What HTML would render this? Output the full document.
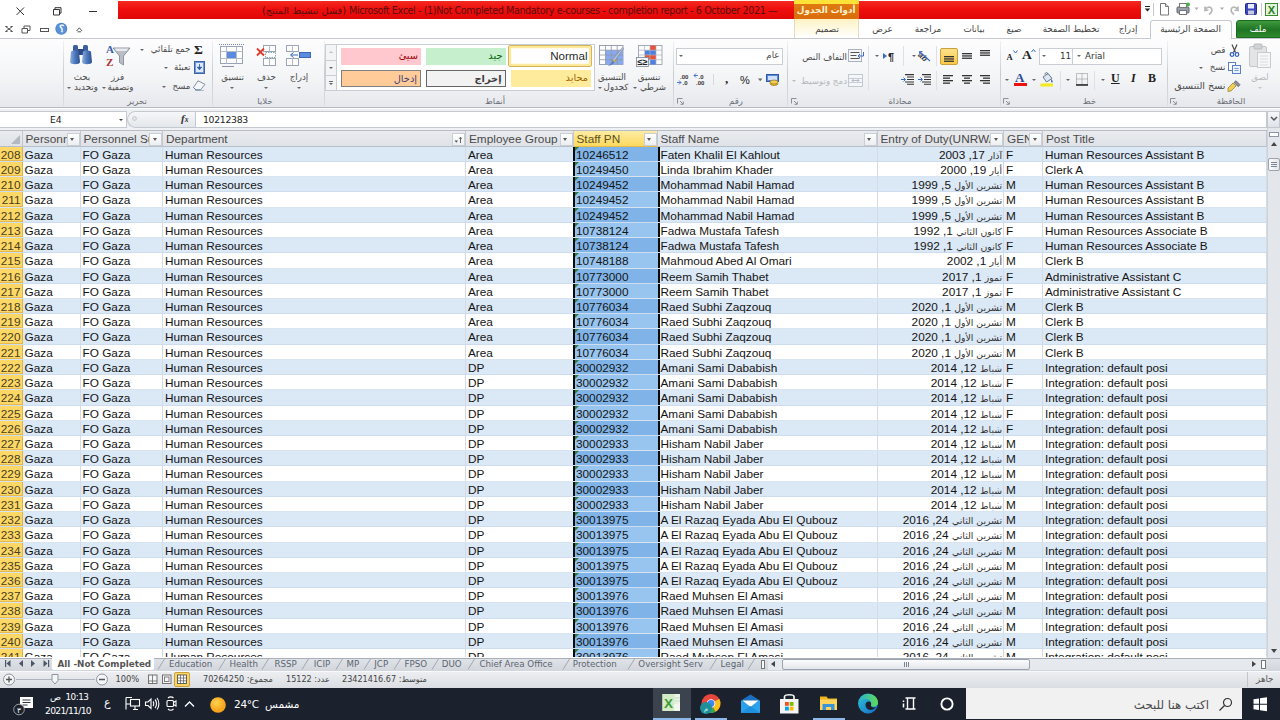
<!DOCTYPE html><html lang="ar"><head><meta charset="utf-8"><title>Excel</title><style>
*{box-sizing:border-box;margin:0;padding:0}
html,body{width:1280px;height:720px;overflow:hidden;background:#fff}
body{position:relative;font-family:"Liberation Sans","DejaVu Sans",sans-serif;font-size:11.8px;color:#000}
.a{position:absolute;white-space:pre}
.ui{font-family:"DejaVu Sans","Liberation Sans",sans-serif;font-size:9.2px;color:#3b3b3b}
.row{position:absolute;left:0;width:1267px;height:15.22px}
.c{position:absolute;top:0;height:100%;line-height:17.4px;white-space:pre;overflow:hidden;border-right:1px solid #d4dbe4;padding-left:2px;color:#141414}
.rh{position:absolute;left:0;top:0;width:22.5px;height:100%;background:#fdd866;border-right:1px solid #e2b340;border-bottom:1px solid #e7b94a;text-align:right;padding-right:1px;line-height:17.4px;color:#4a4020;font-size:11.8px}
.hd{position:absolute;top:130.5px;height:16px;line-height:16.5px;background:linear-gradient(#e9ebee,#dfe2e7);border-right:1px solid #c3c8d0;border-bottom:1px solid #b9bfc8;color:#4a4a4a;padding-left:3px;white-space:pre;overflow:hidden}
.dd{position:absolute;top:2px;width:13px;height:13.2px;background:linear-gradient(#ffffff,#eceef1);border:1px solid #c9cdd4;}
.dd:after{content:"";position:absolute;left:2.6px;top:4.2px;border:2.9px solid transparent;border-top:3.2px solid #5a5a5a;}
.ar{font-family:"DejaVu Sans",sans-serif;font-size:9.3px;color:#333}
.dds:after{display:none}
.tri{position:absolute;left:0;top:0;width:0;height:0;border-top:4px solid #2d7d46;border-right:4px solid transparent}
.glabel{position:absolute;top:95.5px;font-family:"DejaVu Sans","Liberation Sans",sans-serif;font-size:8.5px;color:#6a6f78;transform:translateX(-50%);white-space:pre}
.gsep{position:absolute;top:41px;width:1px;height:65px;background:linear-gradient(#f0f1f3,#c9cdd3 50%,#d9dce1)}
.tab{position:absolute;top:24px;font-family:"DejaVu Sans","Liberation Sans",sans-serif;font-size:8.8px;color:#444;transform:translateX(-50%);white-space:pre}
.lbl{position:absolute;font-family:"DejaVu Sans","Liberation Sans",sans-serif;font-size:8.7px;color:#4c4c4c;white-space:pre}
.cx{transform:translateX(-50%)}
.arr{position:absolute;width:0;height:0;border:2.2px solid transparent;border-top:2.8px solid #666}
.stab{position:absolute;top:659px;font-family:"DejaVu Sans","Liberation Sans",sans-serif;font-size:8.7px;color:#5c6470;white-space:pre}
</style></head><body>
<div class="a" style="left:118px;top:1px;width:1023px;height:17.700px;background:linear-gradient(#f42a22,#ee0f0c 45%,#e00707);"></div>
<div class="a" dir="ltr" style="left:349px;top:4px;width:434px;height:14px;line-height:14px;font-family:'DejaVu Sans','Liberation Sans',sans-serif;font-size:9.6px;color:#5a0d0d;letter-spacing:-0.385px" id="ttl">Microsoft Excel - (1)Not Completed Mandatory e-courses - completion report - 6 October 2021 —</div>
<div class="a" dir="rtl" style="right:934px;top:4px;height:14px;line-height:14px;font-family:'DejaVu Sans',sans-serif;font-size:9.7px;color:#5a0d0d;" id="ttl2">(فشل تنشيط المنتج)</div>
<div class="a" style="left:793.5px;top:0;width:65.5px;height:3.5px;background:#fde23a"></div>
<div class="a" style="left:793.5px;top:3.5px;width:65.5px;height:15.5px;background:linear-gradient(#e07a10,#d96c0c)"></div>
<div class="a" style="left:793.5px;top:19px;width:65.5px;height:19px;background:linear-gradient(#fdf3c4,#ffffff);border-left:1px solid #e4dcc0;border-right:1px solid #e4dcc0"></div>
<div class="a" dir="rtl" style="left:793.5px;top:5px;width:65.5px;text-align:center;font-family:'DejaVu Sans',sans-serif;font-size:8.8px;font-weight:bold;color:#fff3d0">أدوات الجدول</div>
<svg class="a" style="left:0;top:0" width="118" height="38" viewBox="0 0 118 38"><g stroke="#333" stroke-width="1" fill="none"><path d="M16.5 7.5l7.5 7.5M24 7.5l-7.5 7.5"/><path d="M53.5 9.5h6v5.5h-6zM55 9.5v-1.8h6v5.5h-1.5"/><path d="M89 11.5h8"/></g><g stroke="#555" stroke-width="1" fill="none"><path d="M5.5 26.5l7 5M12.5 26.5l-7 5M5.5 26.5h2M10.5 26.5h2M5.5 31.5h2M10.5 31.5h2" /><path d="M22 28.5h5.5v4.5h-5.5zM24 28v-2h6v4.5h-2"/><rect x="40.5" y="28.5" width="8" height="3"/><path d="M76.5 31l2.8-3.2 2.8 3.2"/><path d="M77.5 31.8h3.6"/></g><circle cx="61.3" cy="28.7" r="6" fill="#4a7fc4"/><circle cx="61.3" cy="28.7" r="5.2" fill="#5b92d6"/><text x="61.3" y="32.2" font-size="9.5" font-weight="bold" font-family="Liberation Sans, sans-serif" fill="#fff" text-anchor="middle">؟</text></svg>
<svg class="a" style="left:1141px;top:0" width="139" height="20" viewBox="0 0 139 20"><path d="M4 6.5h5" stroke="#222" stroke-width="1"/><path d="M3.7 8.5h5.6l-2.8 3z" fill="#222"/><path d="M12.5 3v13" stroke="#c8c8c8"/><path d="M19.5 3.5h5l3 3v8.500h-8z" fill="#fff" stroke="#777"/><path d="M24.500 3.500v3h3" fill="#e8e8e8" stroke="#777"/><rect x="36" y="7" width="12" height="6" rx="1" fill="#9aa3ad" stroke="#5b646e"/><rect x="38.500" y="3.500" width="7" height="4" fill="#fff" stroke="#777"/><rect x="38.500" y="10.500" width="7" height="4" fill="#fff" stroke="#777"/><circle cx="47" cy="4.500" r="2" fill="#4caf50"/><path d="M53.500 7.500h4l-2 2.500z" fill="#aaa"/><path d="M64 6.500l0 4 3.500-0.500M64 10c1.500-3 5-4 6.500-1.500 1 2-0.500 4.500-2.500 6" fill="none" stroke="#b5b5b5" stroke-width="1.600"/><path d="M79 7.500h4l-2 2.500z" fill="#aaa"/><path d="M97 6.500l0 4-3.500-0.500M97 10c-1.500-3-5-4-6.500-1.500-1 2 0.500 4.500 2.500 6" fill="none" stroke="#b5b5b5" stroke-width="1.600"/><rect x="104.500" y="3.500" width="11" height="11" rx="1" fill="#3b46b8" stroke="#252d86"/><rect x="107" y="4" width="6" height="4.500" fill="#e9ecff"/><rect x="107" y="10.500" width="6" height="4" fill="#c7cbe0"/><path d="M120.500 3v13" stroke="#c8c8c8"/><rect x="124.500" y="3.500" width="12" height="12" fill="#e4f3dc" stroke="#3b8a2f"/><text x="130.500" y="13.500" font-size="11" font-weight="bold" font-family="Liberation Sans, sans-serif" fill="#2a7d23" text-anchor="middle">X</text></svg>
<div class="a" style="left:0;top:37.500px;width:1280px;height:70.500px;background:linear-gradient(#fdfdfe,#f4f5f7 55%,#e6e8ec);border-top:1px solid #c5c9cf;border-bottom:1px solid #b4b9c1"></div>
<div class="a" style="left:1235.500px;top:20px;width:46px;height:18px;background:linear-gradient(#3f9a3c,#1e7424 55%,#2f8a2c);border:1px solid #1a6a1f;border-radius:3px 3px 0 0"></div>
<div class="tab" dir="rtl" style="left:1258px;color:#fff;">ملف</div>
<div class="a" style="left:1150px;top:20px;width:82px;height:18.500px;background:#fdfdfe;border:1px solid #c5c9cf;border-bottom:none;border-radius:3px 3px 0 0"></div>
<div class="tab" dir="rtl" style="left:1190.5px">الصفحة الرئيسية</div>
<div class="tab" dir="rtl" style="left:1128px">إدراج</div>
<div class="tab" dir="rtl" style="left:1071px">تخطيط الصفحة</div>
<div class="tab" dir="rtl" style="left:1014px">صيغ</div>
<div class="tab" dir="rtl" style="left:974px">بيانات</div>
<div class="tab" dir="rtl" style="left:928px">مراجعة</div>
<div class="tab" dir="rtl" style="left:882.5px">عرض</div>
<div class="tab" dir="rtl" style="left:827px">تصميم</div>
<div class="gsep" style="left:62.5px"></div>
<div class="gsep" style="left:212px"></div>
<div class="gsep" style="left:324px"></div>
<div class="gsep" style="left:672.5px"></div>
<div class="gsep" style="left:787px"></div>
<div class="gsep" style="left:999.5px"></div>
<div class="gsep" style="left:1167px"></div>
<div class="glabel" dir="rtl" style="left:137px">تحرير</div>
<div class="glabel" dir="rtl" style="left:265px">خلايا</div>
<div class="glabel" dir="rtl" style="left:495px">أنماط</div>
<div class="glabel" dir="rtl" style="left:736px">رقم</div>
<div class="glabel" dir="rtl" style="left:900px">محاذاة</div>
<div class="glabel" dir="rtl" style="left:1089.5px">خط</div>
<div class="glabel" dir="rtl" style="left:1231px">الحافظة</div>
<svg class="a" style="left:676.5px;top:98px" width="7" height="7" viewBox="0 0 7 7"><path d="M0.500 5.500v-5h5" fill="none" stroke="#8a9099"/><path d="M3 3l3 3M6.300 3.500v2.800h-2.800" fill="none" stroke="#8a9099"/></svg>
<svg class="a" style="left:791px;top:98px" width="7" height="7" viewBox="0 0 7 7"><path d="M0.500 5.500v-5h5" fill="none" stroke="#8a9099"/><path d="M3 3l3 3M6.300 3.500v2.800h-2.800" fill="none" stroke="#8a9099"/></svg>
<svg class="a" style="left:1003px;top:98px" width="7" height="7" viewBox="0 0 7 7"><path d="M0.500 5.500v-5h5" fill="none" stroke="#8a9099"/><path d="M3 3l3 3M6.300 3.500v2.800h-2.800" fill="none" stroke="#8a9099"/></svg>
<svg class="a" style="left:1170px;top:98px" width="7" height="7" viewBox="0 0 7 7"><path d="M0.500 5.500v-5h5" fill="none" stroke="#8a9099"/><path d="M3 3l3 3M6.300 3.500v2.800h-2.800" fill="none" stroke="#8a9099"/></svg>
<svg class="a" style="left:69px;top:44px" width="24" height="22" viewBox="0 0 24 22"><defs><linearGradient id="bn" x1="0" x2="1"><stop offset="0" stop-color="#8fb0dd"/><stop offset="0.500" stop-color="#4d78bd"/><stop offset="1" stop-color="#2d4f91"/></linearGradient></defs><rect x="4" y="1" width="5" height="7" rx="1.500" fill="#3d5f9f"/><rect x="14" y="1" width="5" height="7" rx="1.500" fill="#3d5f9f"/><rect x="9" y="5" width="6" height="6" fill="#2d4a85"/><path d="M2 8c0-2 8-2 8 0l1 10c0 3-10 3-10 0z" fill="url(#bn)"/><path d="M14 8c0-2 8-2 8 0l1 10c0 3-10 3-10 0z" fill="url(#bn)"/></svg>
<div class="lbl cx" dir="rtl" style="left:82px;top:72px;">بحث</div>
<div class="lbl cx" dir="rtl" style="left:86px;top:81.5px;">وتحديد</div>
<div class="arr" style="left:67.3px;top:86.5px;border-top-color:#666"></div>
<svg class="a" style="left:105px;top:43px" width="27" height="25" viewBox="0 0 27 25"><text x="1" y="10" font-size="11" font-weight="bold" font-family="Liberation Serif, serif" fill="#3a5fa8">A</text><text x="1" y="23" font-size="11" font-weight="bold" font-family="Liberation Serif, serif" fill="#a83232">Z</text><path d="M8 5h17l-6.500 8v9l-4-2.500v-6.500z" fill="#b9bec6" stroke="#7c828c" stroke-width="0.800"/><path d="M9.500 5.600h14l-2 2.500h-10z" fill="#e9ebee"/></svg>
<div class="lbl cx" dir="rtl" style="left:117.5px;top:72px;">فرز</div>
<div class="lbl cx" dir="rtl" style="left:120.5px;top:81.5px;">وتصفية</div>
<div class="arr" style="left:101.8px;top:86.5px;border-top-color:#666"></div>
<div class="a" style="left:194px;top:42px;font-family:'Liberation Serif',serif;font-weight:bold;font-size:13.500px;color:#222">Σ</div>
<div class="lbl" dir="rtl" style="right:1089.5px;top:43.5px;">جمع تلقائي</div>
<div class="arr" style="left:139.8px;top:48.5px;border-top-color:#666"></div>
<svg class="a" style="left:193.500px;top:61px" width="11" height="13" viewBox="0 0 11 13"><rect x="0.500" y="0.500" width="10" height="12" fill="#6d97d6" stroke="#3c63a6"/><rect x="2" y="2" width="7" height="9" fill="#dfeaf9"/><path d="M5.500 3v5M3.300 6.200l2.200 2.600 2.200-2.600z" fill="#2c58a8" stroke="#2c58a8" stroke-width="0.800"/></svg>
<div class="lbl" dir="rtl" style="right:1089.5px;top:62px;">تعبئة</div>
<div class="arr" style="left:164.3px;top:67px;border-top-color:#666"></div>
<svg class="a" style="left:193px;top:80px" width="13" height="11" viewBox="0 0 13 11"><path d="M5 0.800l7 3.500-4.500 5.700h-4.500l-2.500-2.500z" fill="#f4f6fa" stroke="#7d8796" stroke-width="0.900"/><path d="M0.500 7.500l2.500 2.500h4.500" fill="none" stroke="#5a79b5"/><path d="M2 10.500h9" stroke="#9aa" stroke-width="0.700"/></svg>
<div class="lbl" dir="rtl" style="right:1089.5px;top:80.5px;">مسح</div>
<div class="arr" style="left:161.8px;top:85.5px;border-top-color:#666"></div>
<svg class="a" style="left:219px;top:44px" width="26" height="24" viewBox="0 0 26 24"><rect x="1.500" y="2.500" width="22" height="17" fill="#fff" stroke="#9aa4b4"/><path d="M1.500 7.500h22M1.500 14.500h22M7.500 2.500v17M17.500 2.500v17" stroke="#b4bcc9"/><rect x="8" y="8" width="9" height="6" fill="#5a8be0"/><path d="M0 0.500h26" stroke="#7a8aa5" stroke-dasharray="1 1"/><path d="M3 22.500h12" stroke="#8a94a5"/></svg>
<div class="lbl cx" dir="rtl" style="left:232.5px;top:72px;">تنسيق</div>
<div class="arr" style="left:230.3px;top:86.5px;border-top-color:#666"></div>
<svg class="a" style="left:256px;top:44px" width="22" height="24" viewBox="0 0 22 24"><rect x="7.500" y="1.500" width="12" height="6" fill="#fff" stroke="#9aa4b4"/><rect x="7.500" y="14.500" width="12" height="7" fill="#fff" stroke="#9aa4b4"/><path d="M13.500 1.500v6M13.500 14.500v7" stroke="#b4bcc9"/><rect x="9.500" y="8.500" width="10" height="5" fill="#fff" stroke="#8aa" stroke-dasharray="1.500 1"/><path d="M1 4.500l7 7M8 4.500l-7 7" stroke="#e03a2a" stroke-width="1.800"/></svg>
<div class="lbl cx" dir="rtl" style="left:266.5px;top:72px;">حذف</div>
<div class="arr" style="left:264.3px;top:86.5px;border-top-color:#666"></div>
<svg class="a" style="left:285px;top:44px" width="27" height="24" viewBox="0 0 27 24"><rect x="1.500" y="1.500" width="12" height="6" fill="#fff" stroke="#9aa4b4"/><rect x="1.500" y="14.500" width="12" height="7" fill="#fff" stroke="#9aa4b4"/><path d="M7.500 1.500v6M7.500 14.500v7" stroke="#b4bcc9"/><rect x="14.500" y="8.500" width="11" height="5" fill="#5a8be0" stroke="#3c68b8"/><path d="M13 11h-7M8.500 8.500l-3 2.500 3 2.500" stroke="#3c68b8" fill="none"/></svg>
<div class="lbl cx" dir="rtl" style="left:299px;top:72px;">إدراج</div>
<div class="arr" style="left:296.8px;top:86.5px;border-top-color:#666"></div>
<div class="a" style="left:325px;top:44px;width:269.500px;height:46.500px;background:#fff;border:1px solid #c9cdd4"></div>
<div class="a" style="left:325px;top:44px;width:11.500px;height:46.500px;background:#f3f4f6;border:1px solid #c9cdd4"></div>
<div class="a" style="left:325px;top:59.500px;width:11.500px;height:1px;background:#c9cdd4"></div><div class="a" style="left:325px;top:75px;width:11.500px;height:1px;background:#c9cdd4"></div>
<div class="arr" style="left:328.500px;top:54px;border-top-color:transparent;border-bottom:2.800px solid #c0c0c0;top:49px"></div>
<div class="arr" style="left:328.6px;top:67px;border-top-color:#666"></div>
<div class="arr" style="left:328.6px;top:83px;border-top-color:#666"></div>
<div class="a" style="left:328.500px;top:80.500px;width:4.500px;height:1px;background:#666"></div>
<div class="a" dir="rtl" style="left:341px;top:47.500px;width:80px;height:17px;line-height:16px;background:#ffc7ce;color:#9c0006;text-align:left;padding-left:3px;font-family:'DejaVu Sans',sans-serif;font-size:9.800px;direction:ltr;text-align:right;padding-right:3px">سيئ</div>
<div class="a" dir="rtl" style="left:426px;top:47.500px;width:79.500px;height:17px;line-height:16px;background:#c6efce;color:#006100;font-family:'DejaVu Sans',sans-serif;font-size:9.800px;direction:ltr;text-align:right;padding-right:3px">جيد</div>
<div class="a" style="left:508.200px;top:45px;width:84px;height:21.600px;background:#fff;border:1px solid #d1b75a;border-radius:2px;box-shadow:inset 0 0 0 2.200px #fde89c"></div>
<div class="a" style="left:509px;top:47.500px;width:78.500px;height:17px;line-height:16px;text-align:right;font-size:11.600px;color:#2a2a2a">Normal</div>
<div class="a" dir="rtl" style="left:341px;top:70px;width:80px;height:17px;line-height:15px;background:#ffcc99;border:1px solid #7f7f7f;color:#3f3f76;font-family:'DejaVu Sans',sans-serif;font-size:9.800px;direction:ltr;text-align:right;padding-right:3px">إدخال</div>
<div class="a" dir="rtl" style="left:426px;top:70px;width:79.500px;height:17px;line-height:15px;background:#f2f2f2;border:1px solid #666;color:#3f3f3f;font-weight:bold;font-family:'DejaVu Sans',sans-serif;font-size:9.800px;direction:ltr;text-align:right;padding-right:3px">إخراج</div>
<div class="a" dir="rtl" style="left:510.500px;top:70px;width:80.500px;height:17px;line-height:16px;background:#ffeb9c;color:#9c6500;font-family:'DejaVu Sans',sans-serif;font-size:9.800px;direction:ltr;text-align:right;padding-right:3px">محايد</div>
<svg class="a" style="left:598px;top:44px" width="28" height="24" viewBox="0 0 28 24"><rect x="1.500" y="1.500" width="23.500" height="19" fill="#fdfdfe" stroke="#9098a6" stroke-width="0.900"/><rect x="7.500" y="6.200" width="17.500" height="14.300" fill="#86a9ef"/><path d="M1.500 6.200h23.500M1.500 11h23.500M1.500 15.700h23.500M7.500 1.500v19M13.300 1.500v19M19.200 1.500v19" stroke="#8f98a8" stroke-width="0.800"/><path d="M24.500 3.500l1.200 1-9.500 13-2-1.500z" fill="#b9c3d4" stroke="#6f7f9a" stroke-width="0.600"/><path d="M16 15.500l1.800 1.400-1 1.500-2-1.500z" fill="#d6b21e"/><path d="M14.600 16.700l2 1.500c-1.500 2.500-4.500 3.500-7 3.500 2.500-1 3.800-3 5-5z" fill="#5b7fc0"/></svg>
<div class="lbl cx" dir="rtl" style="left:612px;top:72px;">التنسيق</div>
<div class="lbl cx" dir="rtl" style="left:616px;top:81.5px;">كجدول</div>
<div class="arr" style="left:598.3px;top:86.5px;border-top-color:#666"></div>
<svg class="a" style="left:636px;top:44px" width="28" height="24" viewBox="0 0 28 24"><rect x="2.500" y="1.500" width="23.500" height="19" fill="#fdfdfe" stroke="#9ba3b0" stroke-width="0.900"/><rect x="14" y="1.500" width="6" height="4.700" fill="#e8523c"/><rect x="9" y="6.200" width="11" height="4.800" fill="#4f7fe0"/><rect x="9" y="11" width="11" height="4.700" fill="#e8523c"/><rect x="14" y="15.700" width="6" height="4.800" fill="#4f7fe0"/><path d="M2.500 6.200h23.500M2.500 11h23.500M2.500 15.700h23.500M8.500 1.500v19M14 1.500v19M20 1.500v19" stroke="#aab1bd" stroke-width="0.700"/><rect x="0.500" y="13.500" width="12" height="9" fill="#f4f6fb" stroke="#7c8594" stroke-width="0.800"/><text x="6.500" y="21" font-size="8.500" font-weight="bold" font-family="Liberation Sans, sans-serif" fill="#222" text-anchor="middle" textLength="10" lengthAdjust="spacingAndGlyphs">≤≥</text></svg>
<div class="lbl cx" dir="rtl" style="left:649px;top:72px;">تنسيق</div>
<div class="lbl cx" dir="rtl" style="left:653px;top:81.5px;">شرطي</div>
<div class="arr" style="left:633.3px;top:86.5px;border-top-color:#666"></div>
<div class="a" style="left:676px;top:47.500px;width:106.500px;height:17px;background:#fff;border:1px solid #c9cdd4"></div>
<div class="lbl" dir="rtl" style="right:500.5px;top:50px;">عام</div>
<div class="arr" style="left:679.3px;top:54.5px;border-top-color:#666"></div>
<svg class="a" style="left:676px;top:71px" width="108" height="17" viewBox="0 0 108 17"><text x="4" y="7.500" font-size="6" font-weight="bold" font-family="Liberation Sans, sans-serif" fill="#333">.00</text><text x="6.500" y="14" font-size="6" font-weight="bold" font-family="Liberation Sans, sans-serif" fill="#333">.0</text><path d="M1 11.500h4M3 9.500l2 2-2 2" stroke="#3c68c8" fill="none" stroke-width="0.900"/><text x="22.500" y="7.500" font-size="6" font-weight="bold" font-family="Liberation Sans, sans-serif" fill="#333">.0</text><text x="20" y="14" font-size="6" font-weight="bold" font-family="Liberation Sans, sans-serif" fill="#333">.00</text><path d="M22 4.500h-4M20 2.500l-2 2 2 2" stroke="#3c68c8" fill="none" stroke-width="0.900"/><path d="M37.500 3v11" stroke="#d5d8dd"/><text x="49" y="12" font-size="13" font-weight="bold" font-family="Liberation Serif, serif" fill="#222">,</text><text x="64" y="13" font-size="11" font-family="Liberation Sans, sans-serif" fill="#222">%</text><path d="M82 7.500h4.400l-2.200 2.800z" fill="#666"/><rect x="90.500" y="3.500" width="12" height="7" fill="#5b8ad8" stroke="#2f57a5"/><rect x="92" y="5" width="9" height="4" fill="#cfe0f8"/><ellipse cx="98" cy="12.500" rx="4" ry="2" fill="#e8b93a" stroke="#9a7a1a" stroke-width="0.700"/><ellipse cx="98" cy="11" rx="4" ry="2" fill="#f2cc55" stroke="#9a7a1a" stroke-width="0.700"/></svg>
<svg class="a" style="left:848px;top:49px" width="16" height="13" viewBox="0 0 16 13"><rect x="0.500" y="0.500" width="13" height="12" fill="#f4f6f9" stroke="#aab2bf"/><path d="M2.500 3.500h9M2.500 6.500h6M2.500 9.500h9" stroke="#555"/><path d="M15.500 3v4h-5M12 5l-2 2 2 2" stroke="#3c68c8" fill="none"/></svg>
<div class="lbl" dir="rtl" style="right:433px;top:51.5px;">التفاف النص</div>
<svg class="a" style="left:848px;top:74px" width="16" height="13" viewBox="0 0 16 13"><rect x="0.500" y="0.500" width="14" height="12" fill="#f4f6f9" stroke="#c3c8d0"/><path d="M0.500 4.500h14M0.500 8.500h14" stroke="#c9ced6"/><path d="M4 6.500h7M5.500 5l-1.500 1.500 1.500 1.500M9.500 5l1.500 1.500-1.500 1.500" stroke="#b5bcc8" fill="none"/></svg>
<div class="lbl" dir="rtl" style="right:433px;top:75.5px;color:#b5b8bd;">دمج وتوسيط</div>
<div class="arr" style="left:791.8px;top:80px;border-top-color:#bbb"></div>
<div class="a" style="left:868px;top:46px;width:1px;height:44px;background:#dde0e5"></div>
<div class="a" style="left:903px;top:46px;width:1px;height:20px;background:#dde0e5"></div>
<div class="a" style="left:936px;top:46px;width:1px;height:20px;background:#dde0e5"></div>
<div class="a" style="left:936px;top:71px;width:1px;height:19px;background:#dde0e5"></div>
<svg class="a" style="left:882px;top:50px" width="15" height="12" viewBox="0 0 15 12"><path d="M1 3l4 3-4 3z" fill="#3c68c8"/><text x="6" y="10.500" font-size="11" font-weight="bold" font-family="Liberation Sans, sans-serif" fill="#222">¶</text></svg>
<div class="arr" style="left:875.3px;top:55px;border-top-color:#666"></div>
<svg class="a" style="left:916px;top:48px" width="16" height="16" viewBox="0 0 16 16"><text x="3" y="12" font-size="8" font-style="italic" font-weight="bold" font-family="Liberation Sans, sans-serif" fill="#333" transform="rotate(40 8 8)">ab</text><path d="M14 13l-10-9M6.500 3.500l-3 0.200 0.500 3" stroke="#3c68c8" fill="none" stroke-width="1.100"/></svg>
<div class="arr" style="left:911.8px;top:55px;border-top-color:#666"></div>
<div class="a" style="left:940px;top:47.500px;width:17.500px;height:17px;background:linear-gradient(#fde28a,#fbc94a);border:1px solid #c9a03a;border-radius:2px"></div>
<svg class="a" style="left:943.5px;top:56px" width="10" height="7.8999999999999995" viewBox="0 0 10 7.8999999999999995"><rect x="0" y="0.0" width="10" height="1.300" fill="#333"/><rect x="0" y="2.3" width="10" height="1.300" fill="#333"/><rect x="0" y="4.6" width="10" height="1.300" fill="#333"/></svg>
<svg class="a" style="left:962px;top:52.5px" width="10" height="7.8999999999999995" viewBox="0 0 10 7.8999999999999995"><rect x="0" y="0.0" width="10" height="1.300" fill="#333"/><rect x="0" y="2.3" width="10" height="1.300" fill="#333"/><rect x="0" y="4.6" width="10" height="1.300" fill="#333"/></svg>
<svg class="a" style="left:980px;top:49.5px" width="10" height="7.8999999999999995" viewBox="0 0 10 7.8999999999999995"><rect x="0" y="0.0" width="10" height="1.300" fill="#333"/><rect x="0" y="2.3" width="10" height="1.300" fill="#333"/><rect x="0" y="4.6" width="10" height="1.300" fill="#333"/></svg>
<svg class="a" style="left:943px;top:74.5px" width="10" height="11.0" viewBox="0 0 10 11.0"><rect x="0" y="0.0" width="10" height="1.300" fill="#333"/><rect x="0" y="2.5" width="7" height="1.300" fill="#333"/><rect x="0" y="5.0" width="10" height="1.300" fill="#333"/><rect x="0" y="7.5" width="7" height="1.300" fill="#333"/></svg>
<svg class="a" style="left:962px;top:74.5px" width="10" height="11.0" viewBox="0 0 10 11.0"><rect x="0.0" y="0.0" width="10" height="1.300" fill="#333"/><rect x="2.0" y="2.5" width="6" height="1.300" fill="#333"/><rect x="0.0" y="5.0" width="10" height="1.300" fill="#333"/><rect x="2.0" y="7.5" width="6" height="1.300" fill="#333"/></svg>
<svg class="a" style="left:980px;top:74.5px" width="10" height="11.0" viewBox="0 0 10 11.0"><rect x="0" y="0.0" width="10" height="1.300" fill="#333"/><rect x="3" y="2.5" width="7" height="1.300" fill="#333"/><rect x="0" y="5.0" width="10" height="1.300" fill="#333"/><rect x="3" y="7.5" width="7" height="1.300" fill="#333"/></svg>
<svg class="a" style="left:901px;top:74px" width="13" height="11" viewBox="0 0 13 11"><path d="M4 0.600h9M6 3h7M6 5.500h7M4 8h9M6 10.300h7" stroke="#333" stroke-width="1.100"/><path d="M0 5.500h4M2.500 3.500l2 2-2 2" stroke="#3c68c8" fill="none"/></svg>
<svg class="a" style="left:918px;top:74px" width="13" height="11" viewBox="0 0 13 11"><path d="M4 0.600h9M6 3h7M6 5.500h7M4 8h9M6 10.300h7" stroke="#333" stroke-width="1.100"/><path d="M0 5.500h4M2.500 3.500l2 2-2 2" stroke="#3c68c8" fill="none"/></svg>
<div class="a" style="left:1039px;top:47.500px;width:123px;height:17px;background:#fff;border:1px solid #c9cdd4"></div>
<div class="a" style="left:1072px;top:47.500px;width:1px;height:17px;background:#c9cdd4"></div>
<div class="a" style="left:1085px;top:50.500px;font-family:'DejaVu Sans',sans-serif;font-size:8.800px;color:#333">Arial</div>
<div class="a" style="left:1060px;top:50.500px;font-family:'DejaVu Sans',sans-serif;font-size:8.800px;color:#333">11</div>
<div class="arr" style="left:1076.8px;top:54.5px;border-top-color:#666"></div>
<div class="arr" style="left:1041.8px;top:54.5px;border-top-color:#666"></div>
<div class="a" style="left:1006.500px;top:51.500px;font-family:'Liberation Serif',serif;font-weight:bold;font-size:8.500px;color:#222">A</div><svg class="a" style="left:1013px;top:50px" width="5" height="4"><path d="M0.500 0.500l2 2.500 2-2.500" stroke="#3c68c8" fill="none"/></svg>
<div class="a" style="left:1022px;top:46.500px;font-family:'Liberation Serif',serif;font-weight:bold;font-size:13.500px;color:#222">A</div><svg class="a" style="left:1031px;top:48.500px" width="5" height="4"><path d="M0.500 3l2-2.500 2 2.500" stroke="#3c68c8" fill="none"/></svg>
<div class="arr" style="left:1005.3px;top:78.5px;border-top-color:#666"></div>
<div class="a" style="left:1015px;top:70px;font-family:'Liberation Serif',serif;font-weight:bold;font-size:13px;color:#2a4a9a">A</div><div class="a" style="left:1014px;top:83px;width:12.500px;height:3px;background:#ee1111"></div>
<div class="arr" style="left:1031.8px;top:78.5px;border-top-color:#666"></div>
<svg class="a" style="left:1040px;top:72px" width="14" height="15" viewBox="0 0 14 15"><path d="M3 5l5-3.500 4 5-5.500 3.500z" fill="#dfe6f2" stroke="#5a6a85" stroke-width="0.900"/><path d="M5 2.500c0-2.500 3-2.500 3 0" fill="none" stroke="#5a6a85"/><path d="M11.500 7c1.500 2 1.500 3.500 0.500 3.500s-1.500-1.500-0.500-3.500" fill="#3c68c8"/><rect x="0.500" y="11.500" width="12.500" height="3" fill="#f4ea1a"/></svg>
<div class="a" style="left:1060px;top:71px;width:1px;height:19px;background:#dde0e5"></div><div class="a" style="left:1094px;top:71px;width:1px;height:19px;background:#dde0e5"></div>
<div class="arr" style="left:1065.8px;top:78.5px;border-top-color:#666"></div>
<svg class="a" style="left:1076px;top:73px" width="12" height="13" viewBox="0 0 12 13"><path d="M0.500 0.500h11v11h-11zM6 0.500v11M0.500 6h11" stroke="#888" stroke-dasharray="1 1" fill="none"/><path d="M0 12h12" stroke="#222" stroke-width="1.500"/></svg>
<div class="arr" style="left:1100.8px;top:78.5px;border-top-color:#666"></div>
<div class="a" style="left:1111px;top:71px;font-family:'Liberation Serif',serif;font-weight:bold;font-size:12px;color:#222;text-decoration:underline">U</div>
<div class="a" style="left:1131px;top:71px;font-family:'Liberation Serif',serif;font-weight:bold;font-style:italic;font-size:12px;color:#222">I</div>
<div class="a" style="left:1148px;top:71px;font-family:'Liberation Serif',serif;font-weight:bold;font-size:12px;color:#222">B</div>
<svg class="a" style="left:1248px;top:43px" width="25" height="26" viewBox="0 0 25 26"><rect x="1.500" y="3.500" width="17" height="20" rx="1.500" fill="#e3e4e6" stroke="#c4c6ca"/><rect x="6" y="1" width="8" height="5" rx="1" fill="#d0d2d5" stroke="#bbb"/><rect x="9.500" y="9.500" width="13" height="15" fill="#f6f6f7" stroke="#c9cbcf"/><path d="M12 13h8M12 16h8M12 19h8M12 22h8" stroke="#dcdde0"/></svg>
<div class="lbl cx" dir="rtl" style="left:1260px;top:72px;color:#b5b8bd;">لصق</div>
<div class="arr" style="left:1257.8px;top:86.5px;border-top-color:#c5c5c5"></div>
<svg class="a" style="left:1229px;top:43.500px" width="11" height="13" viewBox="0 0 11 13"><path d="M3 0.500l3.500 8M8 0.500l-3.500 8" stroke="#4a4a4a" stroke-width="1.200"/><circle cx="3" cy="10.500" r="1.800" fill="none" stroke="#2d5fc0" stroke-width="1.200"/><circle cx="8" cy="10.500" r="1.800" fill="none" stroke="#2d5fc0" stroke-width="1.200"/></svg>
<div class="lbl" dir="rtl" style="right:54.5px;top:44.5px;">قص</div>
<svg class="a" style="left:1228px;top:61.500px" width="13" height="12" viewBox="0 0 13 12"><rect x="0.500" y="0.500" width="7" height="8" fill="#fff" stroke="#5a80c8"/><rect x="4.500" y="3.500" width="8" height="8" fill="#eaf1fc" stroke="#5a80c8"/><path d="M6.500 6.500h4M6.500 8.500h4" stroke="#7a98d0"/></svg>
<div class="lbl" dir="rtl" style="right:54.5px;top:62px;">نسخ</div>
<div class="arr" style="left:1198.8px;top:67px;border-top-color:#666"></div>
<svg class="a" style="left:1227px;top:79.500px" width="14" height="12" viewBox="0 0 14 12"><path d="M1 8l5-5 3 3-5 5-3 0.500z" fill="#f0cf58" stroke="#a5852a" stroke-width="0.800"/><path d="M7 2.500l2-1.800 4 4-1.800 2z" fill="#8a8f98" stroke="#555" stroke-width="0.700"/></svg>
<div class="lbl" dir="rtl" style="right:54.500px;top:80px;font-size:9.600px">نسخ التنسيق</div>
<div class="a" style="left:0;top:108.500px;width:1280px;height:22px;background:#eef0f3"></div>
<div class="a" style="left:0;top:110.500px;width:127px;height:17.500px;background:#fff;border:1px solid #c4c9d0;border-left:none"></div>
<div class="a" style="left:127px;top:110.500px;width:68px;height:17.500px;background:linear-gradient(#f6f7f9,#e4e7eb);border:1px solid #c4c9d0;border-radius:9px 0 0 9px;border-right:none"></div>
<div class="a" style="left:195px;top:110.500px;width:1072px;height:17.500px;background:#fff;border:1px solid #c4c9d0"></div>
<div class="a" style="left:1267px;top:110.500px;width:13px;height:17.500px;background:linear-gradient(#f6f7f9,#dfe3e8);border:1px solid #c4c9d0"></div>
<svg class="a" style="left:1270px;top:116px" width="8" height="6"><path d="M1 1l3 3 3-3" stroke="#555" stroke-width="1.500" fill="none"/></svg>
<div class="a" style="left:50px;top:114px;font-family:'DejaVu Sans',sans-serif;font-size:9.300px;color:#222;letter-spacing:-0.200px">E4</div>
<div class="arr" style="left:118.8px;top:118.5px;border-top-color:#444"></div>
<div class="a" style="left:131.500px;top:116px;width:5px;height:5px;border-radius:50%;background:#dfe2e7;border:1px solid #c9cdd4"></div>
<div class="a" style="left:181px;top:112px;font-family:'Liberation Serif',serif;font-style:italic;font-weight:bold;font-size:11px;color:#333">f<span style="font-size:7.500px">x</span></div>
<div class="a" style="left:203px;top:114px;font-family:'DejaVu Sans',sans-serif;font-size:9.300px;color:#222;letter-spacing:-0.300px">10212383</div>
<div class="a" style="left:0;top:128px;width:1280px;height:2.500px;background:#eff1f4;border-bottom:1px solid #b7bcc5"></div>
<div class="a" style="left:0;top:130.500px;width:22.500px;height:16px;background:linear-gradient(#e9ebee,#dfe2e7);border-right:1px solid #c3c8d0;border-bottom:1px solid #b9bfc8"></div>
<svg class="a" style="left:11px;top:135px" width="10" height="10"><path d="M9 0v9h-9z" fill="#b4b9c1"/></svg>
<div class="hd" style="left:22.5px;width:58.0px;"><span style="display:inline-block;overflow:hidden;width:41.0px;vertical-align:top">Personnel Area</span><div class="dd" style="left:44.0px"></div></div>
<div class="hd" style="left:80.5px;width:82.5px;"><span style="display:inline-block;overflow:hidden;width:65.5px;vertical-align:top">Personnel Su</span><div class="dd" style="left:68.5px"></div></div>
<div class="hd" style="left:163px;width:303px;"><span style="display:inline-block;overflow:hidden;width:286px;vertical-align:top">Department</span><div class="dd dds" style="left:289px;"><svg style="position:absolute;left:0;top:0" width="11" height="11" viewBox="0 0 11 11"><path d="M1.500 6.500h3.600l-1.800 2.200z" fill="#555"/><path d="M7.500 9v-5.500M6.200 4.800l1.300-1.600 1.300 1.600" stroke="#555" stroke-width="0.900" fill="none"/></svg></div></div>
<div class="hd" style="left:466px;width:107.5px;"><span style="display:inline-block;overflow:hidden;width:90.5px;vertical-align:top">Employee Group</span><div class="dd" style="left:93.5px"></div></div>
<div class="hd" style="left:573.5px;width:84.0px;background:linear-gradient(#feeca4,#fdd95e);color:#5a5220;border-bottom:1px solid #e6bb4a;"><span style="display:inline-block;overflow:hidden;width:67.0px;vertical-align:top">Staff PN</span><div class="dd" style="left:70.0px"></div></div>
<div class="hd" style="left:657.5px;width:220.0px;"><span style="display:inline-block;overflow:hidden;width:203.0px;vertical-align:top">Staff Name</span><div class="dd" style="left:206.0px"></div></div>
<div class="hd" style="left:877.5px;width:126.5px;"><span style="display:inline-block;overflow:hidden;width:109.5px;vertical-align:top">Entry of Duty(UNRWA</span><div class="dd" style="left:112.5px"></div></div>
<div class="hd" style="left:1004px;width:39px;"><span style="display:inline-block;overflow:hidden;width:22px;vertical-align:top">GEN</span><div class="dd" style="left:25px"></div></div>
<div class="hd" style="left:1043px;width:224px;"><span style="display:inline-block;overflow:hidden;width:220px;vertical-align:top">Post Title</span></div>
<div class="a" style="left:0;top:146.800px;width:1267px;height:510.700px;overflow:hidden" id="grid">
<div class="row" style="top:0.00px;background:#dbe8f6;border-bottom:1px solid #cddcee">
<div class="rh">208</div>
<div class="c" style="left:22.5px;width:58.0px;">Gaza</div>
<div class="c" style="left:80.5px;width:82.5px;">FO Gaza</div>
<div class="c" style="left:163px;width:303px;">Human Resources</div>
<div class="c" style="left:466px;width:107.5px;">Area</div>
<div class="c" style="left:573px;width:86.5px;background:#80b4e8;border-left:2.300px solid #0a0a0a;border-right:2.300px solid #0a0a0a;padding-left:1px;"><i class="tri"></i>10246512</div>
<div class="c" style="left:659.5px;width:218.0px;padding-left:1px">Faten Khalil El Kahlout</div>
<div class="c" dir="rtl" style="left:877.5px;width:126.5px;direction:rtl;text-align:right;padding-right:1px;padding-left:0;"><span dir="rtl"><span class="ar">آذار</span> 17, 2003</span></div>
<div class="c" style="left:1004px;width:39px;">F</div>
<div class="c" style="left:1043px;width:224px;">Human Resources Assistant B</div>
</div>
<div class="row" style="top:15.22px;background:#ffffff;border-bottom:1px solid #d9e4f1">
<div class="rh">209</div>
<div class="c" style="left:22.5px;width:58.0px;">Gaza</div>
<div class="c" style="left:80.5px;width:82.5px;">FO Gaza</div>
<div class="c" style="left:163px;width:303px;">Human Resources</div>
<div class="c" style="left:466px;width:107.5px;">Area</div>
<div class="c" style="left:573px;width:86.5px;background:#98c5ef;border-left:2.300px solid #0a0a0a;border-right:2.300px solid #0a0a0a;padding-left:1px;"><i class="tri"></i>10249450</div>
<div class="c" style="left:659.5px;width:218.0px;padding-left:1px">Linda Ibrahim Khader</div>
<div class="c" dir="rtl" style="left:877.5px;width:126.5px;direction:rtl;text-align:right;padding-right:1px;padding-left:0;"><span dir="rtl"><span class="ar">أيار</span> 19, 2000</span></div>
<div class="c" style="left:1004px;width:39px;">F</div>
<div class="c" style="left:1043px;width:224px;">Clerk A</div>
</div>
<div class="row" style="top:30.44px;background:#dbe8f6;border-bottom:1px solid #cddcee">
<div class="rh">210</div>
<div class="c" style="left:22.5px;width:58.0px;">Gaza</div>
<div class="c" style="left:80.5px;width:82.5px;">FO Gaza</div>
<div class="c" style="left:163px;width:303px;">Human Resources</div>
<div class="c" style="left:466px;width:107.5px;">Area</div>
<div class="c" style="left:573px;width:86.5px;background:#80b4e8;border-left:2.300px solid #0a0a0a;border-right:2.300px solid #0a0a0a;padding-left:1px;"><i class="tri"></i>10249452</div>
<div class="c" style="left:659.5px;width:218.0px;padding-left:1px">Mohammad Nabil Hamad</div>
<div class="c" dir="rtl" style="left:877.5px;width:126.5px;direction:rtl;text-align:right;padding-right:1px;padding-left:0;"><span dir="rtl"><span class="ar">تشرين الأول</span> 5, 1999</span></div>
<div class="c" style="left:1004px;width:39px;">M</div>
<div class="c" style="left:1043px;width:224px;">Human Resources Assistant B</div>
</div>
<div class="row" style="top:45.66px;background:#ffffff;border-bottom:1px solid #d9e4f1">
<div class="rh">211</div>
<div class="c" style="left:22.5px;width:58.0px;">Gaza</div>
<div class="c" style="left:80.5px;width:82.5px;">FO Gaza</div>
<div class="c" style="left:163px;width:303px;">Human Resources</div>
<div class="c" style="left:466px;width:107.5px;">Area</div>
<div class="c" style="left:573px;width:86.5px;background:#98c5ef;border-left:2.300px solid #0a0a0a;border-right:2.300px solid #0a0a0a;padding-left:1px;"><i class="tri"></i>10249452</div>
<div class="c" style="left:659.5px;width:218.0px;padding-left:1px">Mohammad Nabil Hamad</div>
<div class="c" dir="rtl" style="left:877.5px;width:126.5px;direction:rtl;text-align:right;padding-right:1px;padding-left:0;"><span dir="rtl"><span class="ar">تشرين الأول</span> 5, 1999</span></div>
<div class="c" style="left:1004px;width:39px;">M</div>
<div class="c" style="left:1043px;width:224px;">Human Resources Assistant B</div>
</div>
<div class="row" style="top:60.88px;background:#dbe8f6;border-bottom:1px solid #cddcee">
<div class="rh">212</div>
<div class="c" style="left:22.5px;width:58.0px;">Gaza</div>
<div class="c" style="left:80.5px;width:82.5px;">FO Gaza</div>
<div class="c" style="left:163px;width:303px;">Human Resources</div>
<div class="c" style="left:466px;width:107.5px;">Area</div>
<div class="c" style="left:573px;width:86.5px;background:#80b4e8;border-left:2.300px solid #0a0a0a;border-right:2.300px solid #0a0a0a;padding-left:1px;"><i class="tri"></i>10249452</div>
<div class="c" style="left:659.5px;width:218.0px;padding-left:1px">Mohammad Nabil Hamad</div>
<div class="c" dir="rtl" style="left:877.5px;width:126.5px;direction:rtl;text-align:right;padding-right:1px;padding-left:0;"><span dir="rtl"><span class="ar">تشرين الأول</span> 5, 1999</span></div>
<div class="c" style="left:1004px;width:39px;">M</div>
<div class="c" style="left:1043px;width:224px;">Human Resources Assistant B</div>
</div>
<div class="row" style="top:76.10px;background:#ffffff;border-bottom:1px solid #d9e4f1">
<div class="rh">213</div>
<div class="c" style="left:22.5px;width:58.0px;">Gaza</div>
<div class="c" style="left:80.5px;width:82.5px;">FO Gaza</div>
<div class="c" style="left:163px;width:303px;">Human Resources</div>
<div class="c" style="left:466px;width:107.5px;">Area</div>
<div class="c" style="left:573px;width:86.5px;background:#98c5ef;border-left:2.300px solid #0a0a0a;border-right:2.300px solid #0a0a0a;padding-left:1px;"><i class="tri"></i>10738124</div>
<div class="c" style="left:659.5px;width:218.0px;padding-left:1px">Fadwa Mustafa Tafesh</div>
<div class="c" dir="rtl" style="left:877.5px;width:126.5px;direction:rtl;text-align:right;padding-right:1px;padding-left:0;"><span dir="rtl"><span class="ar">كانون الثاني</span> 1, 1992</span></div>
<div class="c" style="left:1004px;width:39px;">F</div>
<div class="c" style="left:1043px;width:224px;">Human Resources Associate B</div>
</div>
<div class="row" style="top:91.32px;background:#dbe8f6;border-bottom:1px solid #cddcee">
<div class="rh">214</div>
<div class="c" style="left:22.5px;width:58.0px;">Gaza</div>
<div class="c" style="left:80.5px;width:82.5px;">FO Gaza</div>
<div class="c" style="left:163px;width:303px;">Human Resources</div>
<div class="c" style="left:466px;width:107.5px;">Area</div>
<div class="c" style="left:573px;width:86.5px;background:#80b4e8;border-left:2.300px solid #0a0a0a;border-right:2.300px solid #0a0a0a;padding-left:1px;"><i class="tri"></i>10738124</div>
<div class="c" style="left:659.5px;width:218.0px;padding-left:1px">Fadwa Mustafa Tafesh</div>
<div class="c" dir="rtl" style="left:877.5px;width:126.5px;direction:rtl;text-align:right;padding-right:1px;padding-left:0;"><span dir="rtl"><span class="ar">كانون الثاني</span> 1, 1992</span></div>
<div class="c" style="left:1004px;width:39px;">F</div>
<div class="c" style="left:1043px;width:224px;">Human Resources Associate B</div>
</div>
<div class="row" style="top:106.54px;background:#ffffff;border-bottom:1px solid #d9e4f1">
<div class="rh">215</div>
<div class="c" style="left:22.5px;width:58.0px;">Gaza</div>
<div class="c" style="left:80.5px;width:82.5px;">FO Gaza</div>
<div class="c" style="left:163px;width:303px;">Human Resources</div>
<div class="c" style="left:466px;width:107.5px;">Area</div>
<div class="c" style="left:573px;width:86.5px;background:#98c5ef;border-left:2.300px solid #0a0a0a;border-right:2.300px solid #0a0a0a;padding-left:1px;"><i class="tri"></i>10748188</div>
<div class="c" style="left:659.5px;width:218.0px;padding-left:1px">Mahmoud Abed Al Omari</div>
<div class="c" dir="rtl" style="left:877.5px;width:126.5px;direction:rtl;text-align:right;padding-right:1px;padding-left:0;"><span dir="rtl"><span class="ar">أيار</span> 1, 2002</span></div>
<div class="c" style="left:1004px;width:39px;">M</div>
<div class="c" style="left:1043px;width:224px;">Clerk B</div>
</div>
<div class="row" style="top:121.76px;background:#dbe8f6;border-bottom:1px solid #cddcee">
<div class="rh">216</div>
<div class="c" style="left:22.5px;width:58.0px;">Gaza</div>
<div class="c" style="left:80.5px;width:82.5px;">FO Gaza</div>
<div class="c" style="left:163px;width:303px;">Human Resources</div>
<div class="c" style="left:466px;width:107.5px;">Area</div>
<div class="c" style="left:573px;width:86.5px;background:#80b4e8;border-left:2.300px solid #0a0a0a;border-right:2.300px solid #0a0a0a;padding-left:1px;"><i class="tri"></i>10773000</div>
<div class="c" style="left:659.5px;width:218.0px;padding-left:1px">Reem Samih Thabet</div>
<div class="c" dir="rtl" style="left:877.5px;width:126.5px;direction:rtl;text-align:right;padding-right:1px;padding-left:0;"><span dir="rtl"><span class="ar">تموز</span> 1, 2017</span></div>
<div class="c" style="left:1004px;width:39px;">F</div>
<div class="c" style="left:1043px;width:224px;">Administrative Assistant C</div>
</div>
<div class="row" style="top:136.98px;background:#ffffff;border-bottom:1px solid #d9e4f1">
<div class="rh">217</div>
<div class="c" style="left:22.5px;width:58.0px;">Gaza</div>
<div class="c" style="left:80.5px;width:82.5px;">FO Gaza</div>
<div class="c" style="left:163px;width:303px;">Human Resources</div>
<div class="c" style="left:466px;width:107.5px;">Area</div>
<div class="c" style="left:573px;width:86.5px;background:#98c5ef;border-left:2.300px solid #0a0a0a;border-right:2.300px solid #0a0a0a;padding-left:1px;"><i class="tri"></i>10773000</div>
<div class="c" style="left:659.5px;width:218.0px;padding-left:1px">Reem Samih Thabet</div>
<div class="c" dir="rtl" style="left:877.5px;width:126.5px;direction:rtl;text-align:right;padding-right:1px;padding-left:0;"><span dir="rtl"><span class="ar">تموز</span> 1, 2017</span></div>
<div class="c" style="left:1004px;width:39px;">F</div>
<div class="c" style="left:1043px;width:224px;">Administrative Assistant C</div>
</div>
<div class="row" style="top:152.20px;background:#dbe8f6;border-bottom:1px solid #cddcee">
<div class="rh">218</div>
<div class="c" style="left:22.5px;width:58.0px;">Gaza</div>
<div class="c" style="left:80.5px;width:82.5px;">FO Gaza</div>
<div class="c" style="left:163px;width:303px;">Human Resources</div>
<div class="c" style="left:466px;width:107.5px;">Area</div>
<div class="c" style="left:573px;width:86.5px;background:#80b4e8;border-left:2.300px solid #0a0a0a;border-right:2.300px solid #0a0a0a;padding-left:1px;"><i class="tri"></i>10776034</div>
<div class="c" style="left:659.5px;width:218.0px;padding-left:1px">Raed Subhi Zaqzouq</div>
<div class="c" dir="rtl" style="left:877.5px;width:126.5px;direction:rtl;text-align:right;padding-right:1px;padding-left:0;"><span dir="rtl"><span class="ar">تشرين الأول</span> 1, 2020</span></div>
<div class="c" style="left:1004px;width:39px;">M</div>
<div class="c" style="left:1043px;width:224px;">Clerk B</div>
</div>
<div class="row" style="top:167.42px;background:#ffffff;border-bottom:1px solid #d9e4f1">
<div class="rh">219</div>
<div class="c" style="left:22.5px;width:58.0px;">Gaza</div>
<div class="c" style="left:80.5px;width:82.5px;">FO Gaza</div>
<div class="c" style="left:163px;width:303px;">Human Resources</div>
<div class="c" style="left:466px;width:107.5px;">Area</div>
<div class="c" style="left:573px;width:86.5px;background:#98c5ef;border-left:2.300px solid #0a0a0a;border-right:2.300px solid #0a0a0a;padding-left:1px;"><i class="tri"></i>10776034</div>
<div class="c" style="left:659.5px;width:218.0px;padding-left:1px">Raed Subhi Zaqzouq</div>
<div class="c" dir="rtl" style="left:877.5px;width:126.5px;direction:rtl;text-align:right;padding-right:1px;padding-left:0;"><span dir="rtl"><span class="ar">تشرين الأول</span> 1, 2020</span></div>
<div class="c" style="left:1004px;width:39px;">M</div>
<div class="c" style="left:1043px;width:224px;">Clerk B</div>
</div>
<div class="row" style="top:182.64px;background:#dbe8f6;border-bottom:1px solid #cddcee">
<div class="rh">220</div>
<div class="c" style="left:22.5px;width:58.0px;">Gaza</div>
<div class="c" style="left:80.5px;width:82.5px;">FO Gaza</div>
<div class="c" style="left:163px;width:303px;">Human Resources</div>
<div class="c" style="left:466px;width:107.5px;">Area</div>
<div class="c" style="left:573px;width:86.5px;background:#80b4e8;border-left:2.300px solid #0a0a0a;border-right:2.300px solid #0a0a0a;padding-left:1px;"><i class="tri"></i>10776034</div>
<div class="c" style="left:659.5px;width:218.0px;padding-left:1px">Raed Subhi Zaqzouq</div>
<div class="c" dir="rtl" style="left:877.5px;width:126.5px;direction:rtl;text-align:right;padding-right:1px;padding-left:0;"><span dir="rtl"><span class="ar">تشرين الأول</span> 1, 2020</span></div>
<div class="c" style="left:1004px;width:39px;">M</div>
<div class="c" style="left:1043px;width:224px;">Clerk B</div>
</div>
<div class="row" style="top:197.86px;background:#ffffff;border-bottom:1px solid #d9e4f1">
<div class="rh">221</div>
<div class="c" style="left:22.5px;width:58.0px;">Gaza</div>
<div class="c" style="left:80.5px;width:82.5px;">FO Gaza</div>
<div class="c" style="left:163px;width:303px;">Human Resources</div>
<div class="c" style="left:466px;width:107.5px;">Area</div>
<div class="c" style="left:573px;width:86.5px;background:#98c5ef;border-left:2.300px solid #0a0a0a;border-right:2.300px solid #0a0a0a;padding-left:1px;"><i class="tri"></i>10776034</div>
<div class="c" style="left:659.5px;width:218.0px;padding-left:1px">Raed Subhi Zaqzouq</div>
<div class="c" dir="rtl" style="left:877.5px;width:126.5px;direction:rtl;text-align:right;padding-right:1px;padding-left:0;"><span dir="rtl"><span class="ar">تشرين الأول</span> 1, 2020</span></div>
<div class="c" style="left:1004px;width:39px;">M</div>
<div class="c" style="left:1043px;width:224px;">Clerk B</div>
</div>
<div class="row" style="top:213.08px;background:#dbe8f6;border-bottom:1px solid #cddcee">
<div class="rh">222</div>
<div class="c" style="left:22.5px;width:58.0px;">Gaza</div>
<div class="c" style="left:80.5px;width:82.5px;">FO Gaza</div>
<div class="c" style="left:163px;width:303px;">Human Resources</div>
<div class="c" style="left:466px;width:107.5px;">DP</div>
<div class="c" style="left:573px;width:86.5px;background:#80b4e8;border-left:2.300px solid #0a0a0a;border-right:2.300px solid #0a0a0a;padding-left:1px;"><i class="tri"></i>30002932</div>
<div class="c" style="left:659.5px;width:218.0px;padding-left:1px">Amani Sami Dababish</div>
<div class="c" dir="rtl" style="left:877.5px;width:126.5px;direction:rtl;text-align:right;padding-right:1px;padding-left:0;"><span dir="rtl"><span class="ar">شباط</span> 12, 2014</span></div>
<div class="c" style="left:1004px;width:39px;">F</div>
<div class="c" style="left:1043px;width:224px;">Integration: default posi</div>
</div>
<div class="row" style="top:228.30px;background:#ffffff;border-bottom:1px solid #d9e4f1">
<div class="rh">223</div>
<div class="c" style="left:22.5px;width:58.0px;">Gaza</div>
<div class="c" style="left:80.5px;width:82.5px;">FO Gaza</div>
<div class="c" style="left:163px;width:303px;">Human Resources</div>
<div class="c" style="left:466px;width:107.5px;">DP</div>
<div class="c" style="left:573px;width:86.5px;background:#98c5ef;border-left:2.300px solid #0a0a0a;border-right:2.300px solid #0a0a0a;padding-left:1px;"><i class="tri"></i>30002932</div>
<div class="c" style="left:659.5px;width:218.0px;padding-left:1px">Amani Sami Dababish</div>
<div class="c" dir="rtl" style="left:877.5px;width:126.5px;direction:rtl;text-align:right;padding-right:1px;padding-left:0;"><span dir="rtl"><span class="ar">شباط</span> 12, 2014</span></div>
<div class="c" style="left:1004px;width:39px;">F</div>
<div class="c" style="left:1043px;width:224px;">Integration: default posi</div>
</div>
<div class="row" style="top:243.52px;background:#dbe8f6;border-bottom:1px solid #cddcee">
<div class="rh">224</div>
<div class="c" style="left:22.5px;width:58.0px;">Gaza</div>
<div class="c" style="left:80.5px;width:82.5px;">FO Gaza</div>
<div class="c" style="left:163px;width:303px;">Human Resources</div>
<div class="c" style="left:466px;width:107.5px;">DP</div>
<div class="c" style="left:573px;width:86.5px;background:#80b4e8;border-left:2.300px solid #0a0a0a;border-right:2.300px solid #0a0a0a;padding-left:1px;"><i class="tri"></i>30002932</div>
<div class="c" style="left:659.5px;width:218.0px;padding-left:1px">Amani Sami Dababish</div>
<div class="c" dir="rtl" style="left:877.5px;width:126.5px;direction:rtl;text-align:right;padding-right:1px;padding-left:0;"><span dir="rtl"><span class="ar">شباط</span> 12, 2014</span></div>
<div class="c" style="left:1004px;width:39px;">F</div>
<div class="c" style="left:1043px;width:224px;">Integration: default posi</div>
</div>
<div class="row" style="top:258.74px;background:#ffffff;border-bottom:1px solid #d9e4f1">
<div class="rh">225</div>
<div class="c" style="left:22.5px;width:58.0px;">Gaza</div>
<div class="c" style="left:80.5px;width:82.5px;">FO Gaza</div>
<div class="c" style="left:163px;width:303px;">Human Resources</div>
<div class="c" style="left:466px;width:107.5px;">DP</div>
<div class="c" style="left:573px;width:86.5px;background:#98c5ef;border-left:2.300px solid #0a0a0a;border-right:2.300px solid #0a0a0a;padding-left:1px;"><i class="tri"></i>30002932</div>
<div class="c" style="left:659.5px;width:218.0px;padding-left:1px">Amani Sami Dababish</div>
<div class="c" dir="rtl" style="left:877.5px;width:126.5px;direction:rtl;text-align:right;padding-right:1px;padding-left:0;"><span dir="rtl"><span class="ar">شباط</span> 12, 2014</span></div>
<div class="c" style="left:1004px;width:39px;">F</div>
<div class="c" style="left:1043px;width:224px;">Integration: default posi</div>
</div>
<div class="row" style="top:273.96px;background:#dbe8f6;border-bottom:1px solid #cddcee">
<div class="rh">226</div>
<div class="c" style="left:22.5px;width:58.0px;">Gaza</div>
<div class="c" style="left:80.5px;width:82.5px;">FO Gaza</div>
<div class="c" style="left:163px;width:303px;">Human Resources</div>
<div class="c" style="left:466px;width:107.5px;">DP</div>
<div class="c" style="left:573px;width:86.5px;background:#80b4e8;border-left:2.300px solid #0a0a0a;border-right:2.300px solid #0a0a0a;padding-left:1px;"><i class="tri"></i>30002932</div>
<div class="c" style="left:659.5px;width:218.0px;padding-left:1px">Amani Sami Dababish</div>
<div class="c" dir="rtl" style="left:877.5px;width:126.5px;direction:rtl;text-align:right;padding-right:1px;padding-left:0;"><span dir="rtl"><span class="ar">شباط</span> 12, 2014</span></div>
<div class="c" style="left:1004px;width:39px;">F</div>
<div class="c" style="left:1043px;width:224px;">Integration: default posi</div>
</div>
<div class="row" style="top:289.18px;background:#ffffff;border-bottom:1px solid #d9e4f1">
<div class="rh">227</div>
<div class="c" style="left:22.5px;width:58.0px;">Gaza</div>
<div class="c" style="left:80.5px;width:82.5px;">FO Gaza</div>
<div class="c" style="left:163px;width:303px;">Human Resources</div>
<div class="c" style="left:466px;width:107.5px;">DP</div>
<div class="c" style="left:573px;width:86.5px;background:#98c5ef;border-left:2.300px solid #0a0a0a;border-right:2.300px solid #0a0a0a;padding-left:1px;"><i class="tri"></i>30002933</div>
<div class="c" style="left:659.5px;width:218.0px;padding-left:1px">Hisham Nabil Jaber</div>
<div class="c" dir="rtl" style="left:877.5px;width:126.5px;direction:rtl;text-align:right;padding-right:1px;padding-left:0;"><span dir="rtl"><span class="ar">شباط</span> 12, 2014</span></div>
<div class="c" style="left:1004px;width:39px;">M</div>
<div class="c" style="left:1043px;width:224px;">Integration: default posi</div>
</div>
<div class="row" style="top:304.40px;background:#dbe8f6;border-bottom:1px solid #cddcee">
<div class="rh">228</div>
<div class="c" style="left:22.5px;width:58.0px;">Gaza</div>
<div class="c" style="left:80.5px;width:82.5px;">FO Gaza</div>
<div class="c" style="left:163px;width:303px;">Human Resources</div>
<div class="c" style="left:466px;width:107.5px;">DP</div>
<div class="c" style="left:573px;width:86.5px;background:#80b4e8;border-left:2.300px solid #0a0a0a;border-right:2.300px solid #0a0a0a;padding-left:1px;"><i class="tri"></i>30002933</div>
<div class="c" style="left:659.5px;width:218.0px;padding-left:1px">Hisham Nabil Jaber</div>
<div class="c" dir="rtl" style="left:877.5px;width:126.5px;direction:rtl;text-align:right;padding-right:1px;padding-left:0;"><span dir="rtl"><span class="ar">شباط</span> 12, 2014</span></div>
<div class="c" style="left:1004px;width:39px;">M</div>
<div class="c" style="left:1043px;width:224px;">Integration: default posi</div>
</div>
<div class="row" style="top:319.62px;background:#ffffff;border-bottom:1px solid #d9e4f1">
<div class="rh">229</div>
<div class="c" style="left:22.5px;width:58.0px;">Gaza</div>
<div class="c" style="left:80.5px;width:82.5px;">FO Gaza</div>
<div class="c" style="left:163px;width:303px;">Human Resources</div>
<div class="c" style="left:466px;width:107.5px;">DP</div>
<div class="c" style="left:573px;width:86.5px;background:#98c5ef;border-left:2.300px solid #0a0a0a;border-right:2.300px solid #0a0a0a;padding-left:1px;"><i class="tri"></i>30002933</div>
<div class="c" style="left:659.5px;width:218.0px;padding-left:1px">Hisham Nabil Jaber</div>
<div class="c" dir="rtl" style="left:877.5px;width:126.5px;direction:rtl;text-align:right;padding-right:1px;padding-left:0;"><span dir="rtl"><span class="ar">شباط</span> 12, 2014</span></div>
<div class="c" style="left:1004px;width:39px;">M</div>
<div class="c" style="left:1043px;width:224px;">Integration: default posi</div>
</div>
<div class="row" style="top:334.84px;background:#dbe8f6;border-bottom:1px solid #cddcee">
<div class="rh">230</div>
<div class="c" style="left:22.5px;width:58.0px;">Gaza</div>
<div class="c" style="left:80.5px;width:82.5px;">FO Gaza</div>
<div class="c" style="left:163px;width:303px;">Human Resources</div>
<div class="c" style="left:466px;width:107.5px;">DP</div>
<div class="c" style="left:573px;width:86.5px;background:#80b4e8;border-left:2.300px solid #0a0a0a;border-right:2.300px solid #0a0a0a;padding-left:1px;"><i class="tri"></i>30002933</div>
<div class="c" style="left:659.5px;width:218.0px;padding-left:1px">Hisham Nabil Jaber</div>
<div class="c" dir="rtl" style="left:877.5px;width:126.5px;direction:rtl;text-align:right;padding-right:1px;padding-left:0;"><span dir="rtl"><span class="ar">شباط</span> 12, 2014</span></div>
<div class="c" style="left:1004px;width:39px;">M</div>
<div class="c" style="left:1043px;width:224px;">Integration: default posi</div>
</div>
<div class="row" style="top:350.06px;background:#ffffff;border-bottom:1px solid #d9e4f1">
<div class="rh">231</div>
<div class="c" style="left:22.5px;width:58.0px;">Gaza</div>
<div class="c" style="left:80.5px;width:82.5px;">FO Gaza</div>
<div class="c" style="left:163px;width:303px;">Human Resources</div>
<div class="c" style="left:466px;width:107.5px;">DP</div>
<div class="c" style="left:573px;width:86.5px;background:#98c5ef;border-left:2.300px solid #0a0a0a;border-right:2.300px solid #0a0a0a;padding-left:1px;"><i class="tri"></i>30002933</div>
<div class="c" style="left:659.5px;width:218.0px;padding-left:1px">Hisham Nabil Jaber</div>
<div class="c" dir="rtl" style="left:877.5px;width:126.5px;direction:rtl;text-align:right;padding-right:1px;padding-left:0;"><span dir="rtl"><span class="ar">شباط</span> 12, 2014</span></div>
<div class="c" style="left:1004px;width:39px;">M</div>
<div class="c" style="left:1043px;width:224px;">Integration: default posi</div>
</div>
<div class="row" style="top:365.28px;background:#dbe8f6;border-bottom:1px solid #cddcee">
<div class="rh">232</div>
<div class="c" style="left:22.5px;width:58.0px;">Gaza</div>
<div class="c" style="left:80.5px;width:82.5px;">FO Gaza</div>
<div class="c" style="left:163px;width:303px;">Human Resources</div>
<div class="c" style="left:466px;width:107.5px;">DP</div>
<div class="c" style="left:573px;width:86.5px;background:#80b4e8;border-left:2.300px solid #0a0a0a;border-right:2.300px solid #0a0a0a;padding-left:1px;"><i class="tri"></i>30013975</div>
<div class="c" style="left:659.5px;width:218.0px;padding-left:1px">A El Razaq Eyada Abu El Qubouz</div>
<div class="c" dir="rtl" style="left:877.5px;width:126.5px;direction:rtl;text-align:right;padding-right:1px;padding-left:0;"><span dir="rtl"><span class="ar">تشرين الثاني</span> 24, 2016</span></div>
<div class="c" style="left:1004px;width:39px;">M</div>
<div class="c" style="left:1043px;width:224px;">Integration: default posi</div>
</div>
<div class="row" style="top:380.50px;background:#ffffff;border-bottom:1px solid #d9e4f1">
<div class="rh">233</div>
<div class="c" style="left:22.5px;width:58.0px;">Gaza</div>
<div class="c" style="left:80.5px;width:82.5px;">FO Gaza</div>
<div class="c" style="left:163px;width:303px;">Human Resources</div>
<div class="c" style="left:466px;width:107.5px;">DP</div>
<div class="c" style="left:573px;width:86.5px;background:#98c5ef;border-left:2.300px solid #0a0a0a;border-right:2.300px solid #0a0a0a;padding-left:1px;"><i class="tri"></i>30013975</div>
<div class="c" style="left:659.5px;width:218.0px;padding-left:1px">A El Razaq Eyada Abu El Qubouz</div>
<div class="c" dir="rtl" style="left:877.5px;width:126.5px;direction:rtl;text-align:right;padding-right:1px;padding-left:0;"><span dir="rtl"><span class="ar">تشرين الثاني</span> 24, 2016</span></div>
<div class="c" style="left:1004px;width:39px;">M</div>
<div class="c" style="left:1043px;width:224px;">Integration: default posi</div>
</div>
<div class="row" style="top:395.72px;background:#dbe8f6;border-bottom:1px solid #cddcee">
<div class="rh">234</div>
<div class="c" style="left:22.5px;width:58.0px;">Gaza</div>
<div class="c" style="left:80.5px;width:82.5px;">FO Gaza</div>
<div class="c" style="left:163px;width:303px;">Human Resources</div>
<div class="c" style="left:466px;width:107.5px;">DP</div>
<div class="c" style="left:573px;width:86.5px;background:#80b4e8;border-left:2.300px solid #0a0a0a;border-right:2.300px solid #0a0a0a;padding-left:1px;"><i class="tri"></i>30013975</div>
<div class="c" style="left:659.5px;width:218.0px;padding-left:1px">A El Razaq Eyada Abu El Qubouz</div>
<div class="c" dir="rtl" style="left:877.5px;width:126.5px;direction:rtl;text-align:right;padding-right:1px;padding-left:0;"><span dir="rtl"><span class="ar">تشرين الثاني</span> 24, 2016</span></div>
<div class="c" style="left:1004px;width:39px;">M</div>
<div class="c" style="left:1043px;width:224px;">Integration: default posi</div>
</div>
<div class="row" style="top:410.94px;background:#ffffff;border-bottom:1px solid #d9e4f1">
<div class="rh">235</div>
<div class="c" style="left:22.5px;width:58.0px;">Gaza</div>
<div class="c" style="left:80.5px;width:82.5px;">FO Gaza</div>
<div class="c" style="left:163px;width:303px;">Human Resources</div>
<div class="c" style="left:466px;width:107.5px;">DP</div>
<div class="c" style="left:573px;width:86.5px;background:#98c5ef;border-left:2.300px solid #0a0a0a;border-right:2.300px solid #0a0a0a;padding-left:1px;"><i class="tri"></i>30013975</div>
<div class="c" style="left:659.5px;width:218.0px;padding-left:1px">A El Razaq Eyada Abu El Qubouz</div>
<div class="c" dir="rtl" style="left:877.5px;width:126.5px;direction:rtl;text-align:right;padding-right:1px;padding-left:0;"><span dir="rtl"><span class="ar">تشرين الثاني</span> 24, 2016</span></div>
<div class="c" style="left:1004px;width:39px;">M</div>
<div class="c" style="left:1043px;width:224px;">Integration: default posi</div>
</div>
<div class="row" style="top:426.16px;background:#dbe8f6;border-bottom:1px solid #cddcee">
<div class="rh">236</div>
<div class="c" style="left:22.5px;width:58.0px;">Gaza</div>
<div class="c" style="left:80.5px;width:82.5px;">FO Gaza</div>
<div class="c" style="left:163px;width:303px;">Human Resources</div>
<div class="c" style="left:466px;width:107.5px;">DP</div>
<div class="c" style="left:573px;width:86.5px;background:#80b4e8;border-left:2.300px solid #0a0a0a;border-right:2.300px solid #0a0a0a;padding-left:1px;"><i class="tri"></i>30013975</div>
<div class="c" style="left:659.5px;width:218.0px;padding-left:1px">A El Razaq Eyada Abu El Qubouz</div>
<div class="c" dir="rtl" style="left:877.5px;width:126.5px;direction:rtl;text-align:right;padding-right:1px;padding-left:0;"><span dir="rtl"><span class="ar">تشرين الثاني</span> 24, 2016</span></div>
<div class="c" style="left:1004px;width:39px;">M</div>
<div class="c" style="left:1043px;width:224px;">Integration: default posi</div>
</div>
<div class="row" style="top:441.38px;background:#ffffff;border-bottom:1px solid #d9e4f1">
<div class="rh">237</div>
<div class="c" style="left:22.5px;width:58.0px;">Gaza</div>
<div class="c" style="left:80.5px;width:82.5px;">FO Gaza</div>
<div class="c" style="left:163px;width:303px;">Human Resources</div>
<div class="c" style="left:466px;width:107.5px;">DP</div>
<div class="c" style="left:573px;width:86.5px;background:#98c5ef;border-left:2.300px solid #0a0a0a;border-right:2.300px solid #0a0a0a;padding-left:1px;"><i class="tri"></i>30013976</div>
<div class="c" style="left:659.5px;width:218.0px;padding-left:1px">Raed Muhsen El Amasi</div>
<div class="c" dir="rtl" style="left:877.5px;width:126.5px;direction:rtl;text-align:right;padding-right:1px;padding-left:0;"><span dir="rtl"><span class="ar">تشرين الثاني</span> 24, 2016</span></div>
<div class="c" style="left:1004px;width:39px;">M</div>
<div class="c" style="left:1043px;width:224px;">Integration: default posi</div>
</div>
<div class="row" style="top:456.60px;background:#dbe8f6;border-bottom:1px solid #cddcee">
<div class="rh">238</div>
<div class="c" style="left:22.5px;width:58.0px;">Gaza</div>
<div class="c" style="left:80.5px;width:82.5px;">FO Gaza</div>
<div class="c" style="left:163px;width:303px;">Human Resources</div>
<div class="c" style="left:466px;width:107.5px;">DP</div>
<div class="c" style="left:573px;width:86.5px;background:#80b4e8;border-left:2.300px solid #0a0a0a;border-right:2.300px solid #0a0a0a;padding-left:1px;"><i class="tri"></i>30013976</div>
<div class="c" style="left:659.5px;width:218.0px;padding-left:1px">Raed Muhsen El Amasi</div>
<div class="c" dir="rtl" style="left:877.5px;width:126.5px;direction:rtl;text-align:right;padding-right:1px;padding-left:0;"><span dir="rtl"><span class="ar">تشرين الثاني</span> 24, 2016</span></div>
<div class="c" style="left:1004px;width:39px;">M</div>
<div class="c" style="left:1043px;width:224px;">Integration: default posi</div>
</div>
<div class="row" style="top:471.82px;background:#ffffff;border-bottom:1px solid #d9e4f1">
<div class="rh">239</div>
<div class="c" style="left:22.5px;width:58.0px;">Gaza</div>
<div class="c" style="left:80.5px;width:82.5px;">FO Gaza</div>
<div class="c" style="left:163px;width:303px;">Human Resources</div>
<div class="c" style="left:466px;width:107.5px;">DP</div>
<div class="c" style="left:573px;width:86.5px;background:#98c5ef;border-left:2.300px solid #0a0a0a;border-right:2.300px solid #0a0a0a;padding-left:1px;"><i class="tri"></i>30013976</div>
<div class="c" style="left:659.5px;width:218.0px;padding-left:1px">Raed Muhsen El Amasi</div>
<div class="c" dir="rtl" style="left:877.5px;width:126.5px;direction:rtl;text-align:right;padding-right:1px;padding-left:0;"><span dir="rtl"><span class="ar">تشرين الثاني</span> 24, 2016</span></div>
<div class="c" style="left:1004px;width:39px;">M</div>
<div class="c" style="left:1043px;width:224px;">Integration: default posi</div>
</div>
<div class="row" style="top:487.04px;background:#dbe8f6;border-bottom:1px solid #cddcee">
<div class="rh">240</div>
<div class="c" style="left:22.5px;width:58.0px;">Gaza</div>
<div class="c" style="left:80.5px;width:82.5px;">FO Gaza</div>
<div class="c" style="left:163px;width:303px;">Human Resources</div>
<div class="c" style="left:466px;width:107.5px;">DP</div>
<div class="c" style="left:573px;width:86.5px;background:#80b4e8;border-left:2.300px solid #0a0a0a;border-right:2.300px solid #0a0a0a;padding-left:1px;"><i class="tri"></i>30013976</div>
<div class="c" style="left:659.5px;width:218.0px;padding-left:1px">Raed Muhsen El Amasi</div>
<div class="c" dir="rtl" style="left:877.5px;width:126.5px;direction:rtl;text-align:right;padding-right:1px;padding-left:0;"><span dir="rtl"><span class="ar">تشرين الثاني</span> 24, 2016</span></div>
<div class="c" style="left:1004px;width:39px;">M</div>
<div class="c" style="left:1043px;width:224px;">Integration: default posi</div>
</div>
<div class="row" style="top:502.26px;background:#ffffff;border-bottom:1px solid #d9e4f1">
<div class="rh">241</div>
<div class="c" style="left:22.5px;width:58.0px;">Gaza</div>
<div class="c" style="left:80.5px;width:82.5px;">FO Gaza</div>
<div class="c" style="left:163px;width:303px;">Human Resources</div>
<div class="c" style="left:466px;width:107.5px;">DP</div>
<div class="c" style="left:573px;width:86.5px;background:#98c5ef;border-left:2.300px solid #0a0a0a;border-right:2.300px solid #0a0a0a;padding-left:1px;"><i class="tri"></i>30013976</div>
<div class="c" style="left:659.5px;width:218.0px;padding-left:1px">Raed Muhsen El Amasi</div>
<div class="c" dir="rtl" style="left:877.5px;width:126.5px;direction:rtl;text-align:right;padding-right:1px;padding-left:0;"><span dir="rtl"><span class="ar">تشرين الثاني</span> 24, 2016</span></div>
<div class="c" style="left:1004px;width:39px;">M</div>
<div class="c" style="left:1043px;width:224px;">Integration: default posi</div>
</div>
</div>
<div class="a" style="left:1267px;top:128px;width:13px;height:530px;background:#e3e6eb;border-left:1px solid #cfd3d9"></div>
<div class="a" style="left:1268.500px;top:132px;width:10.500px;height:5px;background:#fff;border:1px solid #8e96a3"></div>
<div class="a" style="left:1270.500px;top:141.500px;width:0;height:0;border:3.500px solid transparent;border-bottom:4px solid #444;border-top:none"></div>
<div class="a" style="left:1268px;top:157.500px;width:11.500px;height:13px;background:linear-gradient(90deg,#fafbfc,#e4e7eb);border:1px solid #9ca3ae;border-radius:2px"></div>
<div class="a" style="left:1270.500px;top:161.500px;width:6.500px;height:1px;background:#7d848f;box-shadow:0 2px 0 #7d848f,0 4px 0 #7d848f"></div>
<div class="a" style="left:1270.500px;top:648.800px;width:0;height:0;border:3.500px solid transparent;border-top:4px solid #444;border-bottom:none"></div>
<div class="a" style="left:0;top:657.500px;width:1280px;height:13px;background:linear-gradient(#dfe3e8,#d2d6dc);border-top:1px solid #aab0ba"></div>
<svg class="a" style="left:4px;top:659px" width="46" height="10" viewBox="0 0 46 10"><g fill="#4a5666"><path d="M1 1h1.200v7h-1.200zM6.500 1v7l-4-3.500z"/><path d="M19 1v7l-4-3.500z"/><path d="M27 1v7l4-3.500z"/><path d="M39.500 1v7l4-3.500zM44 1h1.200v7h-1.200z"/></g></svg>
<div class="a" style="left:52px;top:657.500px;width:102px;height:12.500px;background:#fff;border-radius:0 0 2px 2px"></div>
<div class="stab" style="left:57.500px;font-weight:bold;color:#555;font-size:8.800px">All -Not Completed</div>
<div class="stab" style="left:169px">Education</div>
<div class="stab" style="left:229.4px">Health</div>
<div class="stab" style="left:274.5px">RSSP</div>
<div class="stab" style="left:313.8px">ICIP</div>
<div class="stab" style="left:346.5px">MP</div>
<div class="stab" style="left:374.3px">JCP</div>
<div class="stab" style="left:404.6px">FPSO</div>
<div class="stab" style="left:441.8px">DUO</div>
<div class="stab" style="left:479.4px">Chief Area Office</div>
<div class="stab" style="left:572.8px">Protection</div>
<div class="stab" style="left:638.3px">Oversight Serv</div>
<div class="stab" style="left:720.6px">Legal</div>
<svg class="a" style="left:0;top:658px" width="780" height="12" viewBox="0 0 780 12"><g stroke="#9aa1ad" stroke-width="0.900" fill="none"><path d="M158 11.500l6.500-10.500"/><path d="M219 11.500l6.500-10.500"/><path d="M262 11.500l6.500-10.500"/><path d="M302 11.500l6.500-10.500"/><path d="M336 11.500l6.500-10.500"/><path d="M364 11.500l6.500-10.500"/><path d="M394 11.500l6.500-10.500"/><path d="M432 11.500l6.500-10.500"/><path d="M468 11.500l6.500-10.500"/><path d="M563 11.500l6.500-10.500"/><path d="M628 11.500l6.500-10.500"/><path d="M710 11.500l6.500-10.500"/><path d="M748 11.500l6.500-10.500"/></g></svg>
<div class="a" style="left:760.500px;top:659.500px;width:4.500px;height:9.500px;background:#fff;border:1px solid #777"></div>
<div class="a" style="left:768px;top:658.500px;width:498px;height:11.500px;background:#e6e9ed"></div>
<div class="a" style="left:770.500px;top:661px;width:0;height:0;border:3.500px solid transparent;border-right:4px solid #444;border-left:none"></div>
<div class="a" style="left:782px;top:658.500px;width:248px;height:11px;background:linear-gradient(#fbfcfd,#e2e5ea);border:1px solid #9ca3ae;border-radius:2px"></div>
<div class="a" style="left:903.500px;top:662px;width:1px;height:4.500px;background:#7d848f;box-shadow:2px 0 0 #7d848f,4px 0 0 #7d848f"></div>
<div class="a" style="left:1252px;top:661px;width:0;height:0;border:3.500px solid transparent;border-left:4px solid #444;border-right:none"></div>
<div class="a" style="left:1261px;top:659.500px;width:4.500px;height:9.500px;background:#fff;border:1px solid #777"></div>
<div class="a" style="left:0;top:670.500px;width:1280px;height:18px;background:linear-gradient(#eceef1,#d9dce1);border-top:1px solid #f8f9fa"></div>
<div class="a" style="left:1247px;top:672px;width:1px;height:15px;background:#c1c6cd"></div>
<div class="lbl" dir="rtl" style="right:6.500px;top:674px;font-size:8.700px;color:#555">جاهز</div>
<svg class="a" style="left:0;top:671px" width="200" height="17" viewBox="0 0 200 17"><g fill="#f4f5f7" stroke="#8c939e"><circle cx="9" cy="8.500" r="5.500"/><circle cx="102" cy="8.500" r="5.500"/></g><path d="M6 8.500h6M9 5.500v6M99 8.500h6" stroke="#555" stroke-width="1.300"/><path d="M16 8.500h79" stroke="#aeb4bd"/><path d="M52 3.500h6v6l-3 3.500-3-3.500z" fill="#f4f5f7" stroke="#8c939e"/><g fill="#f4f5f7" stroke="#666" stroke-width="0.900"><rect x="148.500" y="4" width="8.500" height="8.500"/><rect x="162.500" y="4" width="8.500" height="8.500"/></g><path d="M152.500 4v8.500M148.500 10h8.500" stroke="#666" stroke-width="0.800"/><rect x="164.500" y="6" width="4.500" height="4.500" fill="none" stroke="#666" stroke-width="0.800"/><rect x="174.500" y="1.500" width="15" height="14" rx="1.500" fill="#fbd464" stroke="#c9a03a"/><rect x="177.500" y="4" width="9" height="8.500" fill="#fff" stroke="#555" stroke-width="0.900"/><path d="M180.500 4v8.500M183.500 4v8.500M177.500 7h9M177.500 9.800h9" stroke="#555" stroke-width="0.700"/></svg>
<div class="a" style="left:115.500px;top:673.500px;font-family:'DejaVu Sans',sans-serif;font-size:8.300px;color:#444">100%</div>
<div class="a" dir="rtl" style="left:203px;top:673.500px;font-family:'DejaVu Sans',sans-serif;font-size:8.100px;color:#444">مجموع: 70264250</div>
<div class="a" dir="rtl" style="left:286px;top:673.500px;font-family:'DejaVu Sans',sans-serif;font-size:8.100px;color:#444">عدد: 15122</div>
<div class="a" dir="rtl" style="left:342px;top:673.500px;font-family:'DejaVu Sans',sans-serif;font-size:8.100px;color:#444">متوسط: 23421416.67</div>
<div class="a" style="left:0;top:688.200px;width:1280px;height:31.800px;background:#1b222e"></div>
<div class="a" style="left:653px;top:688.200px;width:38px;height:31.800px;background:#3b434f"></div>
<div class="a" style="left:653px;top:718px;width:38px;height:2px;background:#8db8ea"></div>
<div class="a" style="left:695px;top:718px;width:32px;height:2px;background:#8db8ea"></div>
<div class="a" style="left:813px;top:718px;width:32px;height:2px;background:#8db8ea"></div>
<div class="a" style="left:966px;top:688.200px;width:276px;height:31.300px;background:#f1f1f1"></div>
<div class="a" dir="rtl" style="right:71px;top:697.500px;font-family:'DejaVu Sans',sans-serif;font-size:11.800px;color:#4a4a4a">اكتب هنا للبحث</div>
<svg class="a" style="left:1218px;top:697px" width="16" height="16" viewBox="0 0 16 16"><circle cx="9.500" cy="5.500" r="4" fill="none" stroke="#333" stroke-width="1.200"/><path d="M6.500 8.500l-5 5" stroke="#333" stroke-width="1.300"/></svg>
<svg class="a" style="left:1253px;top:697px" width="15" height="15" viewBox="0 0 15 15"><g fill="#fff"><path d="M0.500 2.200l5.500-0.800v5.300h-5.500zM7 1.300l7-1v6.400h-7zM0.500 7.800h5.500v5.300l-5.500-0.800zM7 7.800h7v6.400l-7-1z"/></g></svg>
<svg class="a" style="left:653px;top:689px" width="310" height="31" viewBox="0 0 310 31"><rect x="9.500" y="5" width="17.500" height="17" fill="#eaf4e4"/><rect x="9.500" y="5" width="12" height="17" fill="#d3ecc6"/><path d="M21.500 9h5.500M21.500 12h5.500M21.500 15h5.500M21.500 18h5.500" stroke="#c3d3bd" stroke-width="0.800"/><path d="M21 15l6-1v7l-6 0z" fill="#f4f8f1" opacity="0.900"/><text x="15.500" y="18.500" font-size="13.500" font-weight="bold" font-family="Liberation Sans, sans-serif" fill="#3f9a38" text-anchor="middle">X</text><circle cx="58" cy="14.500" r="9.500" fill="#e8453c"/><path d="M58 14.500l-8.200 4.800a9.500 9.500 0 0 0 12.900 3.500z" fill="#34a853"/><path d="M58 14.500l4.700 8.300a9.500 9.500 0 0 0 3.600-13z" fill="#fbc116"/><circle cx="58" cy="14.500" r="4.300" fill="#fff"/><circle cx="58" cy="14.500" r="3.400" fill="#4285f4"/><circle cx="53" cy="19" r="6" fill="#1f8f9a"/><text x="53" y="21.500" font-size="6.500" font-family="DejaVu Sans, sans-serif" fill="#dff" text-anchor="middle">م</text><path d="M88 11.500l9.500-6 9.500 6z" fill="#1a6fc0"/><rect x="88" y="11.500" width="19" height="12.500" fill="#2aa1ea"/><path d="M89.500 11.500h16l-8 6.500z" fill="#fff"/><path d="M88 24l9.500-7 9.500 7z" fill="#1d8fdc"/><rect x="127" y="10" width="18.500" height="14.500" fill="#f4f4f4"/><path d="M131.500 10v-2.300c0-2.600 9.500-2.600 9.500 0v2.300" fill="none" stroke="#f4f4f4" stroke-width="1.700"/><rect x="132" y="13" width="3.800" height="3.800" fill="#f25022"/><rect x="136.700" y="13" width="3.800" height="3.800" fill="#7fba00"/><rect x="132" y="17.700" width="3.800" height="3.800" fill="#00a4ef"/><rect x="136.700" y="17.700" width="3.800" height="3.800" fill="#ffb900"/><path d="M167 7.600h6.500l1.500 2h9v11.400h-17z" fill="#f0b41c"/><rect x="167" y="10.500" width="17" height="10.500" fill="#fcd45e"/><rect x="169.500" y="15" width="12" height="6" fill="#3b93d8"/><rect x="173" y="18" width="5" height="3" fill="#fcd45e"/><defs><linearGradient id="eg" x1="0" y1="0" x2="1" y2="1"><stop offset="0" stop-color="#2fc6d6"/><stop offset="1" stop-color="#1469c9"/></linearGradient><linearGradient id="eg2" x1="0" y1="0" x2="1" y2="0"><stop offset="0" stop-color="#2bb5c9"/><stop offset="1" stop-color="#5fdc5a"/></linearGradient></defs><circle cx="215" cy="14.500" r="10" fill="url(#eg)"/><path d="M206 12c2-6 9-8.500 14-6 3.500 1.800 5.300 5 5 8.500-0.500 2.500-3 3.500-6 3-1.500-0.500-1-2-1-3 0-3-3-5-6-4.500-3 0.500-5 1.500-6 2z" fill="url(#eg2)"/><path d="M212.500 15.500c0-2 2-3.500 4-3 1.500 0.500 2 2 1.500 3.500-0.500 2 2 3 5 2-2 3-6 4-8.500 2-1.500-1.200-2-3-2-4.500z" fill="#1b222e"/><g stroke="#fff" stroke-width="1.400" fill="none"><path d="M252.500 9h10M252.500 20h10M254.500 9v11M260.500 9v11"/><path d="M250.500 11.500v1.500M250.500 14.500v4" stroke-width="1.500"/></g><circle cx="294" cy="15" r="5.600" fill="none" stroke="#fff" stroke-width="1.900"/></svg>
<div class="a" style="left:65.500px;top:691.500px;font-family:'DejaVu Sans',sans-serif;color:#fff;font-size:8.800px;letter-spacing:-0.500px" dir="ltr">10:13</div>
<div class="a" dir="rtl" style="left:50px;top:690.500px;font-family:'DejaVu Sans',sans-serif;color:#fff;font-size:9.200px">ص</div>
<div class="a" style="left:45px;top:705px;font-family:'DejaVu Sans',sans-serif;color:#fff;font-size:9.200px;letter-spacing:-0.700px" dir="ltr">2021/11/10</div>
<div class="a" style="left:104px;top:696px;font-family:'DejaVu Sans',sans-serif;color:#fff;font-size:11px">ع</div>
<svg class="a" style="left:10px;top:692px" width="200" height="26" viewBox="0 0 200 26"><path d="M10 5h13v11h-9l-4 3.500z" fill="#fff"/><path d="M12.500 8h8M12.500 10.500h8M12.500 13h5" stroke="#1b222e" stroke-width="0.900"/><circle cx="9" cy="17.500" r="5.300" fill="#1b222e" stroke="#aaa" stroke-width="0.900"/><text x="9" y="20.500" font-size="7.500" font-family="DejaVu Sans, sans-serif" fill="#fff" text-anchor="middle">٣</text><g stroke="#fff" stroke-width="1.100" fill="none"><rect x="120.500" y="7.500" width="9" height="6.500"/><path d="M116 5.500h6M116 5.500v12M116 12h4M123 17.500h5M125 14v3.500"/></g><g stroke="#fff" stroke-width="1.100" fill="none"><path d="M135.500 10h2.500l3-3v9.500l-3-3h-2.500z"/><path d="M143 9.500c1 1 1 3.500 0 4.500M145 7.500c2 2 2 6.500 0 8.500M147 6c2.500 3 2.500 8.500 0 11.500"/></g><g stroke="#fff" stroke-width="1.100" fill="none"><rect x="157" y="8.500" width="6.500" height="6" rx="1"/><path d="M163.500 10.500l2.500-1.500v5l-2.500-1.500M158 6c1.500-1.500 4-1.500 5.500 0M158 17c1.500 1.500 4 1.500 5.500 0"/></g><path d="M175 14.500l4.500-4.500 4.500 4.500" stroke="#fff" stroke-width="1.300" fill="none"/></svg>
<svg class="a" style="left:209px;top:696px" width="18" height="18" viewBox="0 0 18 18"><defs><radialGradient id="sun" cx="0.400" cy="0.350"><stop offset="0" stop-color="#ffd451"/><stop offset="1" stop-color="#f7a51c"/></radialGradient></defs><circle cx="9" cy="9" r="7.800" fill="url(#sun)"/></svg>
<div class="a" style="left:234px;top:698px;font-family:'DejaVu Sans',sans-serif;color:#fff;font-size:10.500px;letter-spacing:-0.300px" dir="ltr">24°C</div>
<div class="a" dir="rtl" style="left:265px;top:697.500px;font-family:'DejaVu Sans',sans-serif;color:#fff;font-size:10.500px">مشمس</div>
</body></html>
